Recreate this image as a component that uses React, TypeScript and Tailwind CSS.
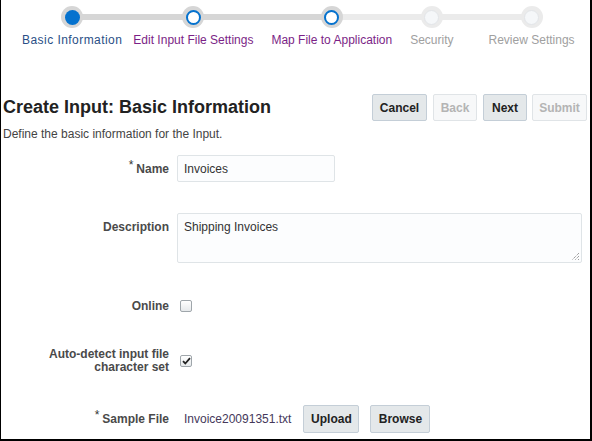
import React from "react";

const steps = [
  { label: "Basic Information", state: "current", ml: 0 },
  { label: "Edit Input File Settings", state: "visited", ml: 11 },
  { label: "Map File to Application", state: "visited", ml: 18 },
  { label: "Security", state: "disabled", ml: 18 },
  { label: "Review Settings", state: "disabled", ml: 35 },
];

function Circle({ state }: { state: string }) {
  if (state === "current") {
    return (
      <div className="w-[22px] h-[22px] rounded-full bg-[#d6d6d6] flex items-center justify-center">
        <div className="w-[15px] h-[15px] rounded-full bg-[#0572ce]" />
      </div>
    );
  }
  if (state === "visited") {
    return (
      <div className="w-[22px] h-[22px] rounded-full bg-[#d6d6d6] flex items-center justify-center">
        <div className="w-[15px] h-[15px] rounded-full bg-white border-[2px] border-[#0572ce]" />
      </div>
    );
  }
  return (
    <div className="w-[22px] h-[22px] rounded-full bg-[#ebebeb] flex items-center justify-center">
      <div className="w-[15px] h-[15px] rounded-full bg-[#f5f7f9] border border-[#e2e5e8]" />
    </div>
  );
}

function Checkbox({ checked }: { checked?: boolean }) {
  return (
    <span className="w-[12px] h-[12px] rounded-[2px] border border-[#9fa6ab] bg-gradient-to-b from-[#ffffff] to-[#e6e9eb] flex items-center justify-center">
      {checked && (
        <svg width="9" height="8" viewBox="0 0 9 8">
          <path d="M1 4.2 L3.3 6.5 L8 1.2" fill="none" stroke="#222" strokeWidth="1.8" />
        </svg>
      )}
    </span>
  );
}

function Btn({ children, disabled, cls }: { children: React.ReactNode; disabled?: boolean; cls: string }) {
  return (
    <button
      className={
        disabled
          ? `h-[27px] ${cls} rounded-[2px] border border-[#e0e4e7] bg-[#f7f8f9] text-[#b4b4b4] font-bold text-[12px] flex items-center justify-center`
          : `h-[27px] ${cls} rounded-[2px] border border-[#c4ced7] bg-[#e4e8ea] text-[#222] font-bold text-[12px] flex items-center justify-center`
      }
    >
      {children}
    </button>
  );
}

export default function App() {
  return (
    <div className="w-[592px] h-[441px] bg-white border-l border-r-2 border-b-2 border-black font-['Liberation_Sans',Arial,sans-serif] text-[12px] text-[#333] overflow-hidden">
      {/* Stepper */}
      <div className="relative pt-[6px] pl-[21px]">
        <div className="absolute top-[14px] left-[69px] w-[262px] h-[6px] bg-[#d6d6d6]" />
        <div className="absolute top-[14px] left-[331px] w-[202px] h-[6px] bg-[#ebebeb]" />
        <div className="relative flex items-start">
          {steps.map((s) => (
            <div key={s.label} className="flex flex-col items-center" style={{ marginLeft: s.ml }}>
              <Circle state={s.state} />
              <div
                className={
                  "mt-[5px] leading-[14px] whitespace-nowrap " +
                  (s.state === "current"
                    ? "text-[#2a4f86] tracking-[0.45px]"
                    : s.state === "visited"
                    ? "text-[#7b1f86]"
                    : "text-[#a0a0a0]")
                }
              >
                {s.label}
              </div>
            </div>
          ))}
        </div>
      </div>

      {/* Header */}
      <div className="mt-[47px] flex items-center justify-between pl-[2px] pr-[3px]">
        <h1 className="text-[18px] font-bold leading-[27px] text-[#222]">Create Input: Basic Information</h1>
        <div className="flex">
          <Btn cls="w-[55px]">Cancel</Btn>
          <div className="ml-[6px]">
            <Btn cls="w-[44px]" disabled>Back</Btn>
          </div>
          <div className="ml-[6px]">
            <Btn cls="w-[44px]">Next</Btn>
          </div>
          <div className="ml-[5px]">
            <Btn cls="w-[55px]" disabled>Submit</Btn>
          </div>
        </div>
      </div>
      <div className="mt-[6px] pl-[2px] leading-[14px] text-[#444]">Define the basic information for the Input.</div>

      {/* Form */}
      <div className="flex flex-col">
        <div className="mt-[14px] flex items-center">
          <div className="w-[168px] text-right font-bold text-[#4a4a4a] leading-[14px]">
            <span className="relative top-[-4px] font-normal text-[#333] mr-[3px]">*</span>Name
          </div>
          <div className="ml-[8px] w-[158px] h-[27px] border border-[#dfe4e7] bg-[#fcfdfe] rounded-[2px] px-[6px] flex items-center text-[#333]">
            Invoices
          </div>
        </div>

        <div className="mt-[31px] flex items-start">
          <div className="w-[168px] text-right font-bold text-[#4a4a4a] leading-[14px] pt-[7px]">Description</div>
          <div className="relative ml-[8px] w-[405px] h-[50px] border border-[#dfe4e7] bg-[#fcfdfe] rounded-[2px] px-[6px] pt-[6px] leading-[14px] text-[#333]">
            Shipping Invoices
            <svg className="absolute right-[1px] bottom-[1px]" width="9" height="9" viewBox="0 0 9 9">
              <path d="M8 1 L1 8 M8 4 L4 8 M8 7 L7 8" stroke="#777" strokeWidth="1" strokeDasharray="1 1" />
            </svg>
          </div>
        </div>

        <div className="mt-[36px] flex items-center h-[14px]">
          <div className="w-[168px] text-right font-bold text-[#4a4a4a] leading-[14px]">Online</div>
          <div className="ml-[11px]">
            <Checkbox />
          </div>
        </div>

        <div className="mt-[35px] flex items-center">
          <div className="w-[168px] text-right font-bold text-[#4a4a4a] leading-[13px]">
            Auto-detect input file
            <br />
            character set
          </div>
          <div className="ml-[11px]">
            <Checkbox checked />
          </div>
        </div>

        <div className="mt-[31px] flex items-center">
          <div className="w-[168px] text-right font-bold text-[#4a4a4a] leading-[14px]">
            <span className="relative top-[-4px] font-normal text-[#333] mr-[3px]">*</span>Sample File
          </div>
          <div className="ml-[15px] text-[#45385a] leading-[14px]">Invoice20091351.txt</div>
          <div className="ml-[12px]">
            <button className="h-[28px] w-[56px] rounded-[2px] border border-[#c4ced7] bg-[#e4e8ea] text-[#222] font-bold text-[12px]">Upload</button>
          </div>
          <div className="ml-[11px]">
            <button className="h-[28px] w-[60px] rounded-[2px] border border-[#c4ced7] bg-[#e4e8ea] text-[#222] font-bold text-[12px]">Browse</button>
          </div>
        </div>
      </div>
    </div>
  );
}
